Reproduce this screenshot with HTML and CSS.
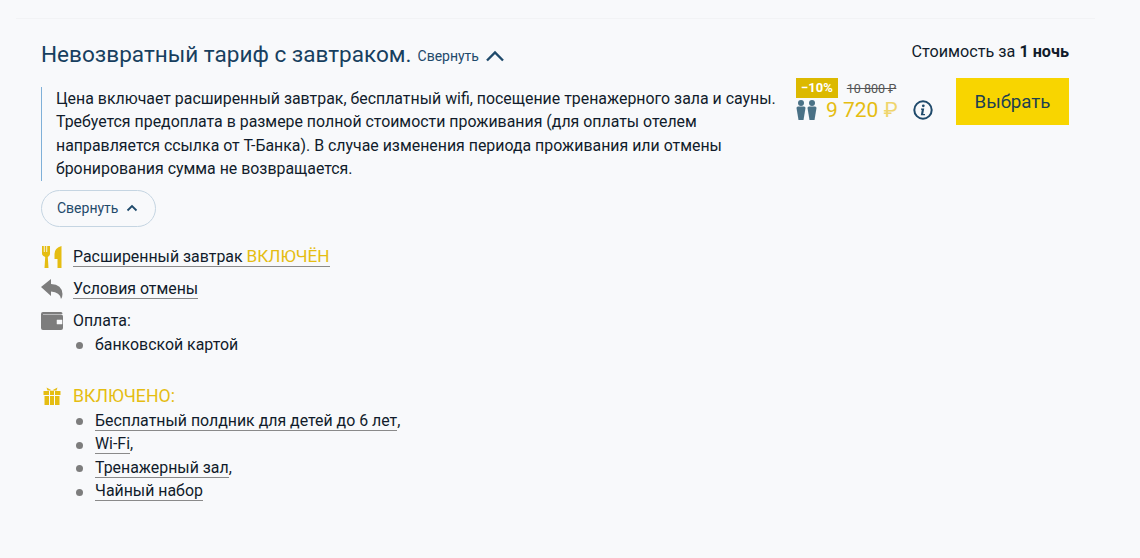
FILE: index.html
```html
<!DOCTYPE html>
<html lang="en">
<head>
    <meta charset="UTF-8">
    <title>Невозвратный тариф</title>
    <link rel="stylesheet" href="styles.css">
</head>
<body>
    <div class="offer">
        <div class="offer-head">
            <div class="offer-title">
                <h2>Невозвратный тариф с завтраком.</h2>
                <a class="title-toggle">Свернуть
                    <svg width="20" height="12" viewBox="0 0 20 12"><path d="M2 10.500 10 2.500l8 8" fill="none" stroke="#1f4a6b" stroke-width="2.400"/></svg>
                </a>
            </div>
            <div class="cost-label">Стоимость за <b>1 ночь</b></div>
        </div>

        <div class="offer-body">
            <div class="offer-info">
                <p class="description">Цена включает расширенный завтрак, бесплатный wifi, посещение тренажерного зала и сауны. Требуется предоплата в размере полной стоимости проживания (для оплаты отелем направляется ссылка от Т-Банка). В случае изменения периода проживания или отмены бронирования сумма не возвращается.</p>
                <button type="button" class="collapse-btn">Свернуть
                    <svg width="12" height="8" viewBox="0 0 12 8"><path d="M1.500 6.500 6 2l4.500 4.500" fill="none" stroke="#1f4a6b" stroke-width="1.800"/></svg>
                </button>
            </div>
            <div class="price-box">
                <div class="price-top">
                    <span class="discount">−10%</span>
                    <span class="old-price">10 800 ₽</span>
                </div>
                <div class="price-bottom">
                    <svg class="guests" width="21" height="20" viewBox="0 0 21 20" fill="#4a7186">
                        <circle cx="5" cy="3" r="3"/>
                        <path d="M0.500 8Q0.500 6.500 2 6.500h6Q9.500 6.500 9.500 8L8.500 14 7.500 20h-5l-1-6z"/>
                        <circle cx="16" cy="3" r="3"/>
                        <path d="M11.500 8Q11.500 6.500 13 6.500h6Q20.500 6.500 20.500 8L19.500 14l-1 6h-5l-1-6z"/>
                    </svg>
                    <span class="new-price">9 720 <span class="rub">₽</span></span>
                    <svg class="info" width="20" height="20" viewBox="0 0 20 20">
                        <circle cx="10" cy="10" r="8.700" fill="none" stroke="#1f4a6b" stroke-width="2"/>
                        <circle cx="10.300" cy="5.800" r="1.400" fill="#1f4a6b"/>
                        <path d="M8 8.500h3.200L10.200 14H12v1.200H7.800L8.800 9.700H8z" fill="#1f4a6b"/>
                    </svg>
                </div>
            </div>
            <button type="button" class="select-btn">Выбрать</button>
        </div>

        <div class="feature feature-first">
            <svg class="feature-icon" width="22" height="24" viewBox="0 0 22 24" fill="#e5bd12">
                <path d="M1 1h1.800v6h.9V1h1.600v6h.9V1H9v7.500Q9 11 6.800 12l.7 11H3.500l.7-11Q1 11 1 8.500z"/>
                <path d="M20.500 1v22H16.500v-9H13.500V9q0-6 7-8z"/>
            </svg>
            <span class="dotted">Расширенный завтрак <span class="accent">ВКЛЮЧЁН</span></span>
        </div>
        <div class="feature feature-cancel">
            <svg class="feature-icon" width="22" height="20" viewBox="0 0 22 20" fill="#7d7d7d">
                <path d="M0 8 10 0v5q11 .5 11.500 10 0 3-1.500 5-1-7-10-7.500V17z"/>
            </svg>
            <span class="dotted">Условия отмены</span>
        </div>
        <div class="feature feature-pay">
            <svg class="feature-icon" width="22" height="18" viewBox="0 0 22 18">
                <path d="M2 0h18q1.500 0 1.500 2H2v.5h18q2 0 2 2V16q0 2-2 2H2q-2 0-2-2V2q0-2 2-2z" fill="#7d7d7d"/>
                <rect x="15" y="7" width="7" height="6" rx="1" fill="#f8f9fb" stroke="#7d7d7d" stroke-width="1.500"/>
            </svg>
            <span>Оплата:</span>
        </div>
        <ul class="bullets">
            <li>банковской картой</li>
        </ul>

        <div class="feature feature-included">
            <svg class="feature-icon" width="22" height="18" viewBox="0 0 18 18" fill="#e5bd12">
                <rect x="0.500" y="4" width="17" height="4"/>
                <rect x="1.500" y="9" width="15" height="9"/>
                <path d="M3.500 0.500 9 3.500 14.500 0.500 13.500 3.500H4.500z"/>
                <path d="M6.500 4v14M11.500 4v14" stroke="#f8f9fb" stroke-width="1"/>
            </svg>
            <span class="accent accent-large">ВКЛЮЧЕНО:</span>
        </div>
        <ul class="bullets bullets-included">
            <li><span class="dotted">Бесплатный полдник для детей до 6 лет</span>,</li>
            <li><span class="dotted">Wi-Fi</span>,</li>
            <li><span class="dotted">Тренажерный зал</span>,</li>
            <li><span class="dotted">Чайный набор</span></li>
        </ul>
    </div>
</body>
</html>
```

FILE: styles.css
```css
body {
    margin: 0;
    background-color: #f8f9fb;
    font-family: 'Roboto', sans-serif;
    font-size: 15.900px;
    color: #111c2b;
}

.offer {
    margin: 18px 45px 0 16px;
    padding: 20px 25px 0;
    border-top: 1px solid #f2f3f5;
}

.offer-head {
    display: flex;
    justify-content: space-between;
    align-items: center;
    height: 30px;
}

.offer-title {
    display: flex;
    align-items: center;
    gap: 6px;
}

.offer-title h2 {
    margin: 0;
    font-size: 22.550px;
    font-weight: 400;
    color: #173f5f;
}

.title-toggle {
    display: flex;
    align-items: center;
    gap: 6px;
    font-size: 14px;
    color: #1f4a6b;
    margin-top: 3px;
}

.cost-label {
    font-size: 16.200px;
    margin: -5px 1px 0 0;
}

.offer-body {
    display: flex;
    align-items: flex-start;
    margin-top: 9px;
}

.offer-info {
    width: 740px;
    padding-top: 9px;
}

.description {
    margin: 0;
    padding: 0 0 0 14px;
    border-left: 1px solid #7fb0d8;
    line-height: 23.400px;
}

.collapse-btn {
    display: flex;
    align-items: center;
    gap: 8px;
    margin-top: 9px;
    padding: 0 17px 0 15px;
    height: 37px;
    background: none;
    border: 1px solid #c5d5e2;
    border-radius: 19px;
    font-family: inherit;
    font-size: 14px;
    color: #1f4a6b;
}

.price-box {
    margin-left: 15px;
    width: 125px;
}

.price-top {
    display: flex;
    align-items: center;
    gap: 9px;
}

.discount {
    padding: 0 5px;
    height: 20px;
    line-height: 20px;
    background-color: #dcb900;
    color: #fff;
    font-size: 13px;
    font-weight: 700;
}

.old-price {
    font-size: 12.500px;
    color: #555;
    text-decoration: line-through;
}

.price-bottom {
    display: flex;
    align-items: center;
}

.guests {
    flex: none;
}

.new-price {
    margin-left: 9px;
    font-size: 21px;
    white-space: nowrap;
    color: #e5bd12;
}

.rub {
    color: #efd56d;
}

.info {
    margin-left: 15px;
    flex: none;
}

.select-btn {
    width: 113px;
    height: 47px;
    margin-left: 35px;
    background-color: #f8d500;
    border: none;
    font-family: inherit;
    font-size: 18.700px;
    color: #1d3f50;
}

.feature {
    display: flex;
    align-items: center;
    margin-top: 10px;
    min-height: 24px;
}

.feature-first {
    margin-top: 18px;
}

.feature-cancel {
    margin-top: 8px;
}

.feature-icon {
    margin-right: 10px;
    flex: none;
}

.dotted {
    border-bottom: 1px solid #8a8a8a;
}

.accent {
    color: #e5bd12;
    font-size: 17.200px;
}

.accent-large {
    font-size: 17.700px;
}

.feature-pay {
    margin-top: 8px;
}

.feature-included {
    margin-top: 28px;
}

.bullets {
    margin: 0;
    padding: 0 0 0 54px;
    line-height: 23.400px;
    list-style: none;
}

.bullets-included {
    margin-top: 1px;
}

.bullets li::before {
    content: "";
    display: inline-block;
    vertical-align: middle;
    width: 7px;
    height: 7px;
    margin: 0 12px 0 -19px;
    border-radius: 50%;
    background-color: #7d7d7d;
}
```
